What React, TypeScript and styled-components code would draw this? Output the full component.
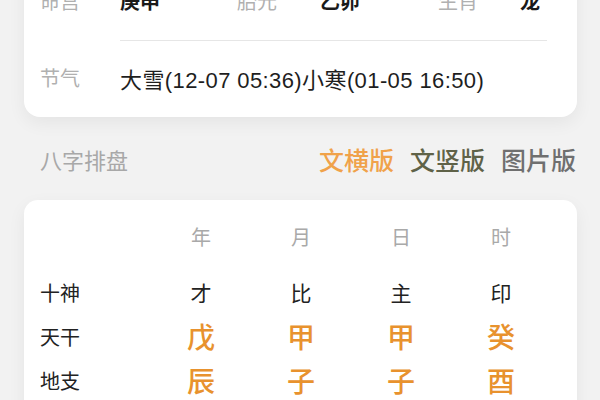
import styled, { createGlobalStyle } from "styled-components";

const GlobalStyle = createGlobalStyle`
  html, body {
    margin: 0;
    padding: 0;
    background: #f2f2f2;
    font-family: "Noto Sans CJK SC", "Noto Sans", sans-serif;
    overflow: hidden;
  }
`;

interface Pillar {
  title: string;
  god: string;
  stem: string;
  branch: string;
}

const pillars: Pillar[] = [
  { title: "年", god: "才", stem: "戊", branch: "辰" },
  { title: "月", god: "比", stem: "甲", branch: "子" },
  { title: "日", god: "主", stem: "甲", branch: "子" },
  { title: "时", god: "印", stem: "癸", branch: "酉" },
];

const Page = styled.div`
  width: 600px;
  height: 400px;
  overflow: hidden;
`;

// page is scrolled: the first card starts above the viewport
const Scroller = styled.div`
  margin-top: -37px;
  padding: 0 23px 0 24px;
`;

const Card = styled.div`
  background: #fff;
  border-radius: 16px;
  box-shadow: 0 6px 18px rgba(0, 0, 0, 0.06);
`;

const InfoRow = styled.div`
  display: flex;
  align-items: stretch;
  height: 77px;
  padding: 0 30px 0 16px;
`;

const InfoLabel = styled.div`
  width: 80px;
  display: flex;
  align-items: center;
  padding-bottom: 2px;
  font-size: 20px;
  color: #b0b0b0;
`;

const InfoBody = styled.div<{ $top?: boolean }>`
  flex: 1;
  display: flex;
  align-items: center;
  padding-bottom: 2px;
  border-top: ${(p) => (p.$top ? "1px solid #e6e6e6" : "none")};
  font-size: 20px;
  color: #1e1e1e;
`;

const TermText = styled.span`
  font-family: "Liberation Sans", "Noto Sans CJK SC", sans-serif;
  font-size: 22px;
  letter-spacing: 0.4px;
  color: #1e1e1e;
`;

const PairGrid = styled.div`
  display: grid;
  grid-template-columns: 117px 83px 118px 82px auto;
  align-items: center;
  width: 100%;
`;

const PairValue = styled.span`
  font-weight: 700;
  color: #1a1a1a;
`;

const PairLabel = styled.span`
  color: #b0b0b0;
`;

const SectionHead = styled.div`
  display: flex;
  align-items: center;
  justify-content: space-between;
  height: 83px;
  padding: 0 1px 0 16px;
`;

const SectionTitle = styled.div`
  font-size: 22px;
  color: #a8a8a8;
`;

const Tabs = styled.div`
  display: flex;
  gap: 16px;
`;

const Tab = styled.span<{ $color: string }>`
  font-size: 25px;
  font-weight: 500;
  color: ${(p) => p.$color};
`;

const ChartCard = styled(Card)`
  padding: 15px 16px 20px;
  border-radius: 14px;
`;

const ChartGrid = styled.div`
  display: grid;
  grid-template-columns: 111px repeat(4, 100px);
  grid-template-rows: 55px 44px 44px 44px;
  align-items: center;
`;

const HeadCell = styled.div`
  align-self: start;
  text-align: center;
  font-size: 20px;
  line-height: 44px;
  color: #a9a9a9;
`;

const RowLabel = styled.div`
  font-size: 20px;
  color: #222;
`;

const GodCell = styled.div`
  text-align: center;
  font-size: 21px;
  color: #222;
`;

const PillarCell = styled.div`
  text-align: center;
  font-size: 28px;
  font-weight: 500;
  color: #e8922e;
`;

const App = () => {
  return (
    <Page>
      <GlobalStyle />
      <Scroller>
        <Card>
          <InfoRow>
            <InfoLabel>命宫</InfoLabel>
            <InfoBody>
              <PairGrid>
                <PairValue>庚申</PairValue>
                <PairLabel>胎元</PairLabel>
                <PairValue>乙卯</PairValue>
                <PairLabel>生肖</PairLabel>
                <PairValue>龙</PairValue>
              </PairGrid>
            </InfoBody>
          </InfoRow>
          <InfoRow>
            <InfoLabel>节气</InfoLabel>
            <InfoBody $top>
              <TermText>大雪(12-07 05:36)小寒(01-05 16:50)</TermText>
            </InfoBody>
          </InfoRow>
        </Card>

        <SectionHead>
          <SectionTitle>八字排盘</SectionTitle>
          <Tabs>
            <Tab $color="#f0a24a">文横版</Tab>
            <Tab $color="#5f6248">文竖版</Tab>
            <Tab $color="#6f6f6f">图片版</Tab>
          </Tabs>
        </SectionHead>

        <ChartCard>
          <ChartGrid>
            <HeadCell />
            {pillars.map((p) => (
              <HeadCell key={p.title}>{p.title}</HeadCell>
            ))}
            <RowLabel>十神</RowLabel>
            {pillars.map((p) => (
              <GodCell key={p.title}>{p.god}</GodCell>
            ))}
            <RowLabel>天干</RowLabel>
            {pillars.map((p) => (
              <PillarCell key={p.title}>{p.stem}</PillarCell>
            ))}
            <RowLabel>地支</RowLabel>
            {pillars.map((p) => (
              <PillarCell key={p.title}>{p.branch}</PillarCell>
            ))}
          </ChartGrid>
        </ChartCard>
      </Scroller>
    </Page>
  );
};

export default App;
